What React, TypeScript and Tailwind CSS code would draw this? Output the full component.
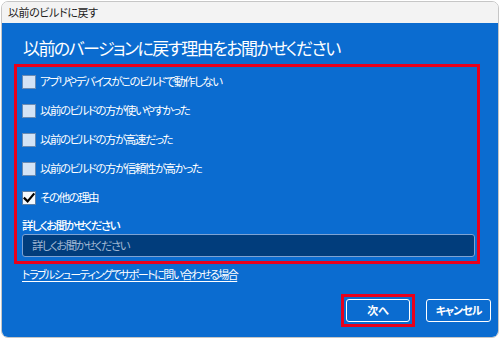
import React from "react";

const reasons = [
  { label: "アプリやデバイスがこのビルドで動作しない", checked: false },
  { label: "以前のビルドの方が使いやすかった", checked: false },
  { label: "以前のビルドの方が高速だった", checked: false },
  { label: "以前のビルドの方が信頼性が高かった", checked: false },
  { label: "その他の理由", checked: true },
];

function Box({ checked }: { checked: boolean }) {
  return (
    <div
      className={
        "w-[14px] h-[14px] border flex items-center justify-center " +
        (checked ? "bg-[#f4f8fc] border-[#5a7ea6]" : "bg-[#d3e3f6] border-[#6a8bb3]")
      }
    >
      {checked && (
        <svg width="12" height="12" viewBox="0 0 12 12">
          <path d="M1.6 6.4 L4.6 9.4 L10.6 2.2" fill="none" stroke="#000" strokeWidth="2.2" strokeLinecap="square" />
        </svg>
      )}
    </div>
  );
}

export default function App() {
  return (
    <div className="w-[500px] h-[340px] bg-white pt-[1px] pl-[1px] font-['Noto_Sans_CJK_JP',sans-serif] [font-feature-settings:'palt']">
      <div className="w-[498px] h-[337px] rounded-[7px] border border-[#c6c6c6] overflow-hidden flex flex-col">
        <div className="h-[21px] bg-[#f3f3f3] flex items-center pl-[6px] text-[11px] tracking-[-0.4px] text-[#1b1b1b]">
          以前のビルドに戻す
        </div>
        <div className="flex-1 bg-[#0b6cd0] flex flex-col text-white">
          <div className="pl-[21px] pt-[15px] h-[35px] text-[17px] leading-[20px] tracking-[-1.6px]">
            以前のバージョンに戻す理由をお聞かせください
          </div>
          <div className="ml-[12px] mt-[6px] w-[466px] border-[3px] border-[#e8001c] pl-[5px] pr-[2px] pb-[4px]">
            {reasons.map((r) => (
              <div key={r.label} className="h-[29px] flex items-center gap-[4px]">
                <Box checked={r.checked} />
                <span className="text-[11.5px] leading-none tracking-[-1.5px]">{r.label}</span>
              </div>
            ))}
            <div className="mt-[5px] h-[16px] text-[11.5px] leading-[16px] tracking-[-1.6px] font-medium">詳しくお聞かせください</div>
            <div className="mt-[1px] h-[23px] rounded-[3px] border border-[#7ea3d3] bg-[#013d7c] flex items-center pl-[9px] text-[11.5px] tracking-[-1.6px] text-[#9fb5d1]">
              詳しくお聞かせください
            </div>
          </div>
          <div className="ml-[20px] mt-[3px] text-[11px] leading-[14px] tracking-[-1.5px] underline underline-offset-2 self-start">
            トラブルシューティングでサポートに問い合わせる場合
          </div>
          <div className="mt-auto mb-[10px] flex items-center justify-end pr-[7px] gap-[11px]">
            <div className="border-[3px] border-[#e8001c] p-[2px]">
              <div className="w-[64px] h-[23px] rounded-[3px] border-[1.5px] border-white flex items-center justify-center text-[11px] font-bold">
                次へ
              </div>
            </div>
            <div className="w-[65px] h-[23px] rounded-[3px] border-[1.5px] border-white flex items-center justify-center text-[11px] font-bold tracking-[-1px]">
              キャンセル
            </div>
          </div>
        </div>
      </div>
    </div>
  );
}
